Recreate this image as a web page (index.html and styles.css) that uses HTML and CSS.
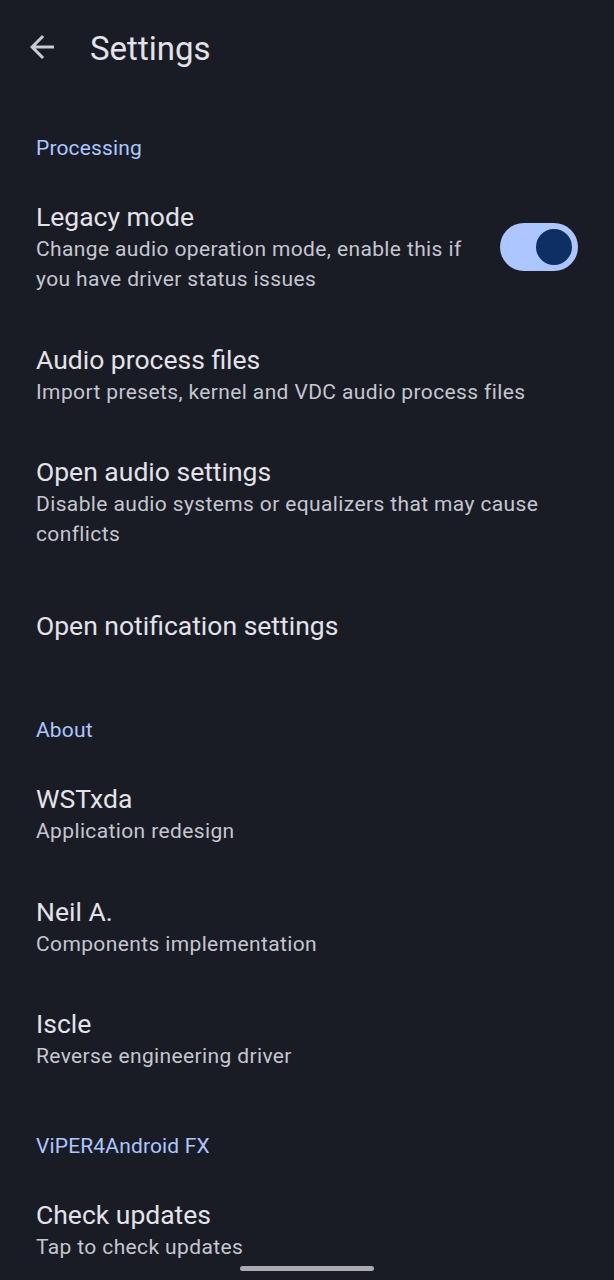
FILE: index.html
```html
<!DOCTYPE html>
<html lang="en">
<head>
<meta charset="utf-8">
<title>Settings</title>
<link rel="stylesheet" href="styles.css">
</head>
<body>
<div class="screen">
  <header class="topbar">
    <svg class="back" viewBox="0 0 24 24" aria-hidden="true">
      <path d="M20 11H7.83l5.59-5.59L12 4l-8 8 8 8 1.41-1.41L7.83 13H20v-2z" fill="currentColor"/>
    </svg>
    <h1 class="title">Settings</h1>
  </header>

  <div class="category">Processing</div>
  <div class="item item-switch">
    <div class="texts">
      <div class="item-title">Legacy mode</div>
      <div class="item-sub">Change audio operation mode, enable this if you have driver status issues</div>
    </div>
    <div class="switch"><div class="thumb"></div></div>
  </div>
  <div class="item">
    <div class="item-title">Audio process files</div>
    <div class="item-sub">Import presets, kernel and VDC audio process files</div>
  </div>
  <div class="item">
    <div class="item-title">Open audio settings</div>
    <div class="item-sub">Disable audio systems or equalizers that may cause conflicts</div>
  </div>
  <div class="item item-single">
    <div class="item-title">Open notification settings</div>
  </div>

  <div class="category">About</div>
  <div class="item">
    <div class="item-title">WSTxda</div>
    <div class="item-sub">Application redesign</div>
  </div>
  <div class="item">
    <div class="item-title">Neil A.</div>
    <div class="item-sub">Components implementation</div>
  </div>
  <div class="item">
    <div class="item-title">Iscle</div>
    <div class="item-sub">Reverse engineering driver</div>
  </div>

  <div class="category">ViPER4Android FX</div>
  <div class="item">
    <div class="item-title">Check updates</div>
    <div class="item-sub">Tap to check updates</div>
  </div>

  <div class="nav-handle"></div>
</div>
</body>
</html>
```
FILE: styles.css
```css
html, body {
  margin: 0;
  padding: 0;
  background: #1a1c25;
}
body {
  font-family: Roboto, "Noto Sans", sans-serif;
  color: #e3e2e9;
}
.screen {
  position: relative;
  width: 614px;
  height: 1280px;
  overflow: hidden;
  background: #1a1c25;
}
.topbar {
  height: 98px;
  display: flex;
  align-items: center;
  padding-left: 24px;
  box-sizing: border-box;
}
.back {
  color: #c8cad4;
  width: 36px;
  height: 36px;
  flex: none;
  position: relative;
  top: -2px;
}
.title {
  margin: 0 0 0 30px;
  font-size: 33px;
  font-weight: 400;
  line-height: 40px;
  color: #e3e2e9;
}
.category {
  padding: 35px 36px 13px;
  font-size: 21px;
  line-height: 30px;
  letter-spacing: 0.15px;
  color: #adc6ff;
}
.item {
  padding: 24px 36px 24.5px;
}
.item-switch {
  display: flex;
  align-items: center;
  gap: 24px;
}
.texts {
  flex: 1;
  min-width: 0;
}
.item-single {
  padding-top: 35.5px;
  padding-bottom: 37px;
}
.item-title {
  font-size: 26.5px;
  line-height: 34px;
  color: #e3e2e9;
}
.item-sub {
  font-size: 21px;
  line-height: 30px;
  letter-spacing: 0.375px;
  color: #c4c6d0;
}
.switch {
  flex: none;
  width: 78px;
  height: 48px;
  border-radius: 24px;
  background: #adc6ff;
  display: flex;
  align-items: center;
  justify-content: flex-end;
  padding-right: 6px;
  box-sizing: border-box;
}
.thumb {
  width: 36px;
  height: 36px;
  border-radius: 50%;
  background: #0d2f63;
}
.nav-handle {
  position: absolute;
  left: 240px;
  top: 1266px;
  width: 134px;
  height: 5px;
  border-radius: 3px;
  background: #a9abb0;
}
```
